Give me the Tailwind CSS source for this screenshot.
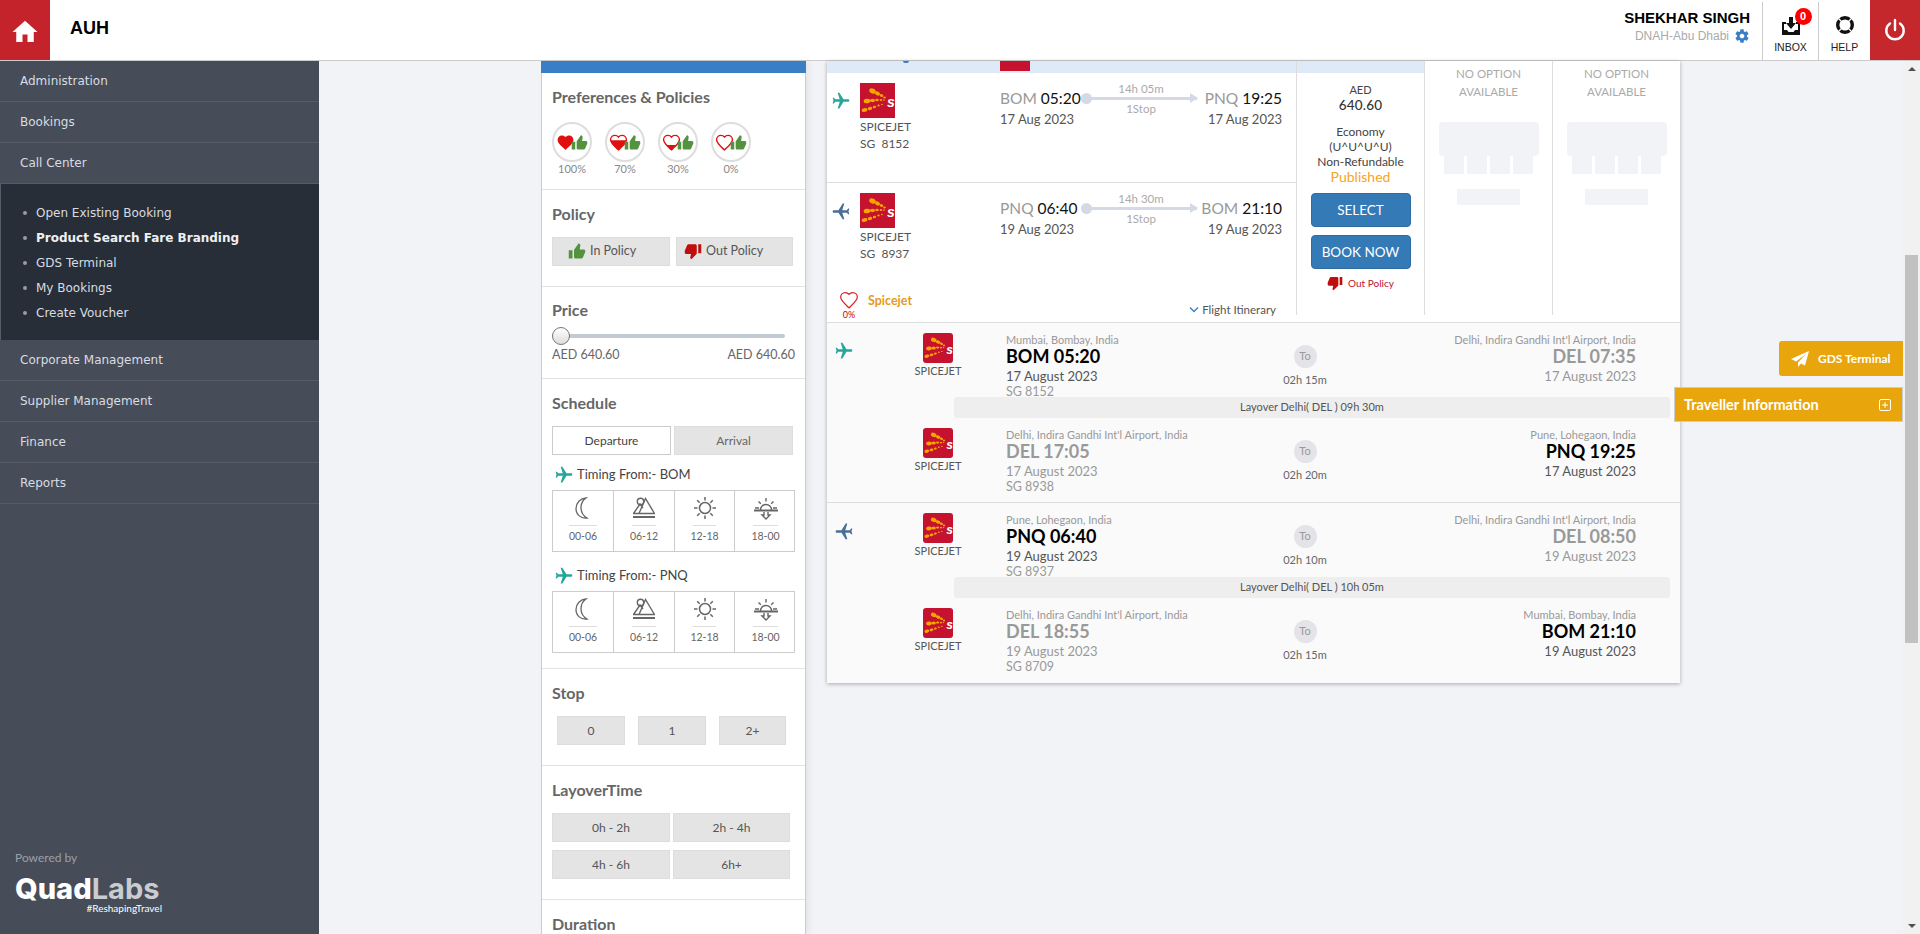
<!DOCTYPE html>
<html>
<head>
<meta charset="utf-8">
<title>AUH</title>
<script src="https://cdn.jsdelivr.net/npm/@tailwindcss/browser@4"></script>
</head>
<body class="m-0 overflow-hidden bg-[#f2f3f7] font-['Lato',sans-serif] text-[#555]">
<svg class="absolute h-0 w-0" width="0" height="0" aria-hidden="true">
  <defs>
    <clipPath id="h70"><rect x="0" y="9" width="24" height="15"/></clipPath>
    <clipPath id="h30"><rect x="0" y="15" width="24" height="9"/></clipPath>
    <symbol id="plane" viewBox="0 0 24 24"><path d="M21 16v-2l-8-5V3.500c0-.83-.67-1.500-1.500-1.500S10 2.670 10 3.500V9l-8 5v2l8-2.500V19l-2 1.500V22l3.500-1 3.500 1v-1.500L13 19v-5.500l8 2.500z" transform="rotate(90 12 12)"/></symbol>
    <symbol id="planel" viewBox="0 0 24 24"><path d="M21 16v-2l-8-5V3.500c0-.83-.67-1.500-1.500-1.500S10 2.670 10 3.500V9l-8 5v2l8-2.500V19l-2 1.500V22l3.500-1 3.500 1v-1.500L13 19v-5.500l8 2.500z" transform="rotate(-90 12 12)"/></symbol>
    <symbol id="up" viewBox="0 0 24 24"><path fill="#53923f" d="M1 22h5V11H1v11zm22-10c0-1.100-.9-2-2-2h-5.300l.75-5.570.03-.32c0-.41-.17-.79-.44-1.060L14.170 1.500 8.590 9.590C8.220 9.950 8 10.450 8 11v9c0 1.100.9 2 2 2h8c.83 0 1.540-.5 1.840-1.220l3.020-7.050c.09-.23.14-.47.14-.73v-1z"/></symbol>
    <symbol id="down" viewBox="0 0 24 24"><path fill="#c00d0d" d="M15 3H6c-.83 0-1.540.5-1.840 1.220l-3.020 7.050c-.09.23-.14.47-.14.73v2c0 1.100.9 2 2 2h6.310l-.95 4.570-.03.32c0 .41.17.79.44 1.060L9.830 23l6.590-6.590c.36-.36.580-.86.580-1.410V5c0-1.100-.9-2-2-2zm4 0v12h4V3h-4z"/></symbol>
    <symbol id="heart" viewBox="0 0 24 24"><path d="M12 21.350l-1.450-1.320C5.400 15.360 2 12.280 2 8.500 2 5.420 4.420 3 7.500 3c1.740 0 3.410.81 4.500 2.090C13.090 3.810 14.760 3 16.500 3 19.580 3 22 5.420 22 8.500c0 3.780-3.400 6.860-8.550 11.540L12 21.350z"/></symbol>
    <symbol id="logo" viewBox="0 0 35 35">
      <rect width="35" height="35" fill="#c4122f"/>
      <g fill="#f7a600">
        <ellipse cx="12.500" cy="8" rx="3.400" ry="2.500" transform="rotate(25 12.500 8)"/><ellipse cx="17.500" cy="10.500" rx="2.600" ry="1.900" transform="rotate(25 17.500 10.500)"/><ellipse cx="21.500" cy="12.500" rx="1.900" ry="1.400" transform="rotate(25 21.500 12.500)"/><ellipse cx="24.500" cy="14.500" rx="1.300" ry="1"/>
        <ellipse cx="7" cy="18" rx="3.400" ry="2.300" transform="rotate(-8 7 18)"/><ellipse cx="12.500" cy="17.500" rx="2.500" ry="1.800"/><ellipse cx="17" cy="17" rx="1.800" ry="1.300"/><ellipse cx="21" cy="17" rx="1.300" ry="1"/><ellipse cx="24" cy="17" rx="0.900" ry="0.800"/>
        <ellipse cx="4.500" cy="27" rx="2.900" ry="1.900" transform="rotate(-15 4.500 27)"/><ellipse cx="10" cy="25.500" rx="2.300" ry="1.600" transform="rotate(-15 10 25.500)"/><ellipse cx="14.500" cy="24" rx="1.700" ry="1.200" transform="rotate(-15 14.500 24)"/><ellipse cx="18.500" cy="22.500" rx="1.200" ry="0.900"/><ellipse cx="22" cy="21.500" rx="0.900" ry="0.700"/>
      </g>
      <text x="31" y="24" font-size="14" font-weight="700" font-style="italic" text-anchor="middle" fill="#fff" font-family="Liberation Sans">s</text>
    </symbol>
    <symbol id="moon" viewBox="0 0 24 24"><path d="M18 2A10.500 10.500 0 0 0 8 12.500C8 18.500 13 23 19 22A12 12 0 0 1 13 12.500 12 12 0 0 1 18 2z" fill="none" stroke="#666" stroke-width="1.300" transform="translate(-3 0)"/></symbol>
    <symbol id="mount" viewBox="0 0 24 24"><g fill="none" stroke="#666" stroke-width="1.400"><circle cx="8.500" cy="5.500" r="3.200"/><path d="M1.500 17.500 8 8l3 4M7 17.500 13.500 2.500l9 15M1 17.500h22"/><path d="M1 21h22" stroke-width="2"/></g></symbol>
    <symbol id="sun" viewBox="0 0 24 24"><g fill="none" stroke="#666" stroke-width="1.500"><circle cx="12" cy="12" r="5.500"/><path d="M12 1v3.500M12 19.500V23M1 12h3.500M19.500 12H23M4.200 4.200l2.500 2.500M17.300 17.300l2.500 2.500M19.800 4.200l-2.500 2.500M6.700 17.300l-2.500 2.500"/></g></symbol>
    <symbol id="sunset" viewBox="0 0 24 24"><g fill="none" stroke="#666" stroke-width="1.400"><path d="M6.500 14a5.500 5.500 0 0 1 11 0"/><path d="M12 2v3.500M1 12h4M19 12h4M4.500 5.500l2.300 2.300M19.500 5.500l-2.300 2.300"/><path d="M0 14.500h24" stroke-width="2"/><path d="M10 16v3H8l4 4 4-4h-2v-3"/></g></symbol>
  </defs>
</svg>

<div class="flex h-[934px] w-[1920px] flex-col overflow-hidden">
  <!-- top bar -->
  <header class="flex h-[61px] flex-none items-stretch border-b border-[#ccc] bg-white">
    <div class="flex h-[60px] w-[50px] items-center justify-center bg-[#c4232b] pt-[3px]">
      <svg width="30" height="30" viewBox="0 0 24 24" fill="#fff"><path d="M10 20v-6h4v6h5v-8h3L12 3 2 12h3v8z"/></svg>
    </div>
    <div class="ml-[20px] flex items-center pb-[3px] font-['Liberation_Sans',sans-serif] text-[18px] font-bold text-black">AUH</div>
    <div class="flex-1"></div>
    <div class="flex flex-col items-end pr-[12px] pt-[8px] font-['Liberation_Sans',sans-serif]">
      <div class="text-[15px] leading-[20px] font-bold text-black">SHEKHAR SINGH</div>
      <div class="flex items-center gap-[5px] text-[12px] leading-[16px] text-[#aaa]">DNAH-Abu Dhabi
        <svg width="16" height="16" viewBox="0 0 24 24" fill="#3a7fc6"><path d="M19.430 12.980c.04-.32.07-.64.07-.98s-.03-.66-.07-.98l2.110-1.650c.19-.15.24-.42.12-.64l-2-3.460c-.12-.22-.39-.3-.61-.22l-2.490 1c-.52-.4-1.080-.73-1.690-.98l-.38-2.650A.488.488 0 0 0 14 2h-4c-.25 0-.46.18-.49.42l-.38 2.650c-.61.25-1.170.59-1.690.98l-2.490-1c-.23-.09-.49 0-.61.22l-2 3.460c-.13.22-.07.49.12.64l2.110 1.650c-.04.32-.07.65-.07.98s.03.66.07.98l-2.110 1.650c-.19.15-.24.42-.12.64l2 3.460c.12.22.39.3.61.22l2.490-1c.52.4 1.080.73 1.690.98l.38 2.650c.03.24.24.42.49.42h4c.25 0 .46-.18.49-.42l.38-2.650c.61-.25 1.170-.59 1.690-.98l2.490 1c.23.09.49 0 .61-.22l2-3.460c.12-.22.07-.49-.12-.64l-2.110-1.650zM12 15.500c-1.930 0-3.500-1.570-3.500-3.500s1.570-3.500 3.500-3.500 3.500 1.570 3.500 3.500-1.570 3.500-3.500 3.500z"/></svg>
      </div>
    </div>
    <div class="mt-[2px] flex w-[56px] flex-col items-center border-l border-[#ccc] font-['Liberation_Sans',sans-serif]">
      <div class="relative mt-[14px] h-[19px] w-[18px]">
        <svg width="18" height="19" viewBox="0 0 18 19"><path d="M0 6h4v2H2v6h3l1.500 2h5L13 14h3V8h-2V6h4v13H0z" fill="#111"/><path d="M7 1h4v6h3l-5 6-5-6h3z" fill="#111"/></svg>
        <span class="absolute left-[13px] top-[-8px] flex h-[17px] w-[17px] items-center justify-center rounded-full bg-[#f00] text-[11px] leading-none font-bold text-white">0</span>
      </div>
      <span class="mt-[6px] text-[10.500px] leading-[12px] text-[#222]">INBOX</span>
    </div>
    <div class="mt-[2px] flex w-[52px] flex-col items-center border-l border-[#ccc] font-['Liberation_Sans',sans-serif]">
      <svg class="mt-[13px]" width="20" height="20" viewBox="0 0 20 20" fill="none"><circle cx="10" cy="10" r="7.300" stroke="#111" stroke-width="3.400"/><path d="M2.500 2.500l5 5M17.500 2.500l-5 5M2.500 17.500l5-5M17.500 17.500l-5-5" stroke="#fff" stroke-width="1.300"/></svg>
      <span class="mt-[6px] text-[10.500px] leading-[12px] text-[#222]">HELP</span>
    </div>
    <div class="flex h-[60px] w-[50px] items-center justify-center bg-[#c4272c]">
      <svg width="22" height="24" viewBox="0 0 22 24" fill="none" stroke="#fff" stroke-width="2.400" stroke-linecap="round"><path d="M11 2v10"/><path d="M6 5.500a8.700 8.700 0 1 0 10 0"/></svg>
    </div>
  </header>

  <div class="flex min-h-0 flex-1">
    <!-- sidebar -->
    <aside class="flex w-[319px] flex-none flex-col bg-[#464d59] font-['DejaVu_Sans',sans-serif] text-[12px] text-[#d8dce2]">
      <div class="flex h-[41px] items-center border-b border-[#565d69] pl-[20px]">Administration</div>
      <div class="flex h-[41px] items-center border-b border-[#565d69] pl-[20px]">Bookings</div>
      <div class="flex h-[41px] items-center border-b border-[#565d69] pl-[20px]">Call Center</div>
      <ul class="h-[156px] border-l border-[#565d69] bg-[#272e38] pl-[22px] pt-[16px]">
        <li class="flex h-[25px] items-center gap-[9px]"><span class="h-[4px] w-[4px] rounded-full bg-[#99a]"></span>Open Existing Booking</li>
        <li class="flex h-[25px] items-center gap-[9px] font-bold text-[#eef0f3]"><span class="h-[4px] w-[4px] rounded-full bg-[#99a]"></span>Product Search Fare Branding</li>
        <li class="flex h-[25px] items-center gap-[9px]"><span class="h-[4px] w-[4px] rounded-full bg-[#99a]"></span>GDS Terminal</li>
        <li class="flex h-[25px] items-center gap-[9px]"><span class="h-[4px] w-[4px] rounded-full bg-[#99a]"></span>My Bookings</li>
        <li class="flex h-[25px] items-center gap-[9px]"><span class="h-[4px] w-[4px] rounded-full bg-[#99a]"></span>Create Voucher</li>
      </ul>
      <div class="flex h-[41px] items-center border-b border-[#565d69] pl-[20px]">Corporate Management</div>
      <div class="flex h-[41px] items-center border-b border-[#565d69] pl-[20px]">Supplier Management</div>
      <div class="flex h-[41px] items-center border-b border-[#565d69] pl-[20px]">Finance</div>
      <div class="flex h-[41px] items-center border-b border-[#565d69] pl-[20px]">Reports</div>
      <div class="flex-1"></div>
      <div class="pb-[20px] pl-[15px]">
        <div class="font-['Lato',sans-serif] text-[12px] leading-[16px] text-[#9aa0a8]">Powered by</div>
        <div class="mt-[9px] w-[147px]">
          <div class="h-[27px] whitespace-nowrap font-['Inter',sans-serif] text-[29px] leading-[27px] font-extrabold text-white">Quad<span class="font-bold text-[#c9ccd0]">Labs</span></div>
          <div class="text-right font-['Lato',sans-serif] text-[10px] leading-[12px] text-white">#ReshapingTravel</div>
        </div>
      </div>
    </aside>

    <!-- main -->
    <main class="relative flex min-w-0 flex-1 pl-[222px]">
      <!-- filters -->
      <div class="h-[873px] w-[265px] flex-none overflow-hidden shadow-[3px_0_6px_rgba(0,0,0,0.06)]">
        <div class="h-[12px] bg-[#3a7fc6]"></div>
        <div class="h-[861px] border-x border-[#ccc] bg-white">
          <section class="h-[117px] border-b border-[#e2e2e2] px-[10px] pt-[14px]">
            <h3 class="text-[16px] leading-[20px] font-bold text-[#666]">Preferences &amp; Policies</h3>
            <div class="mt-[15px] flex gap-[13px]">
              <div class="w-[40px] text-center">
                <div class="flex h-[40px] w-[40px] items-center justify-center rounded-full border-2 border-[#ddd]"><svg width="19" height="19" fill="#e01010"><use href="#heart"/></svg><svg class="ml-[-4px]" width="17" height="17"><use href="#up"/></svg></div>
                <div class="text-[11px] leading-[14px] text-[#888]">100%</div>
              </div>
              <div class="w-[40px] text-center">
                <div class="flex h-[40px] w-[40px] items-center justify-center rounded-full border-2 border-[#ddd]"><svg width="19" height="19" viewBox="0 0 24 24"><use href="#heart" width="24" height="24" fill="none" stroke="#e01010" stroke-width="1.800"/><g clip-path="url(#h70)"><use href="#heart" width="24" height="24" fill="#e01010"/></g></svg><svg class="ml-[-4px]" width="17" height="17"><use href="#up"/></svg></div>
                <div class="text-[11px] leading-[14px] text-[#888]">70%</div>
              </div>
              <div class="w-[40px] text-center">
                <div class="flex h-[40px] w-[40px] items-center justify-center rounded-full border-2 border-[#ddd]"><svg width="19" height="19" viewBox="0 0 24 24"><use href="#heart" width="24" height="24" fill="none" stroke="#e01010" stroke-width="1.800"/><g clip-path="url(#h30)"><use href="#heart" width="24" height="24" fill="#e01010"/></g></svg><svg class="ml-[-4px]" width="17" height="17"><use href="#up"/></svg></div>
                <div class="text-[11px] leading-[14px] text-[#888]">30%</div>
              </div>
              <div class="w-[40px] text-center">
                <div class="flex h-[40px] w-[40px] items-center justify-center rounded-full border-2 border-[#ddd]"><svg width="19" height="19" fill="none" stroke="#e01010" stroke-width="1.800"><use href="#heart"/></svg><svg class="ml-[-4px]" width="17" height="17"><use href="#up"/></svg></div>
                <div class="text-[11px] leading-[14px] text-[#888]">0%</div>
              </div>
            </div>
          </section>
          <section class="h-[97px] border-b border-[#e2e2e2] px-[10px] pt-[14px]">
            <h3 class="text-[16px] leading-[20px] font-bold text-[#666]">Policy</h3>
            <div class="mt-[13px] flex gap-[6px]">
              <div class="flex h-[29px] w-[118px] items-center gap-[4px] border border-[#ddd] bg-[#e4e4e4] pb-[1px] pl-[15px] text-[12.500px] text-[#555]"><svg width="18" height="18"><use href="#up"/></svg>In Policy</div>
              <div class="flex h-[29px] w-[117px] items-center gap-[4px] border border-[#ddd] bg-[#e4e4e4] pb-[1px] pl-[7px] text-[12.500px] text-[#555]"><svg width="18" height="18"><use href="#down"/></svg>Out Policy</div>
            </div>
          </section>
          <section class="h-[92px] border-b border-[#e2e2e2] px-[10px] pt-[13px]">
            <h3 class="text-[16px] leading-[20px] font-bold text-[#666]">Price</h3>
            <div class="relative mt-[7px] h-[18px] w-[233px]">
              <div class="absolute left-0 right-0 top-[7px] h-[4px] rounded bg-[#c3cad3]"></div>
              <div class="absolute left-0 top-0 h-[18px] w-[18px] rounded-full border border-[#777] bg-gradient-to-b from-white to-[#ddd]"></div>
            </div>
            <div class="mt-[2px] flex w-[243px] justify-between text-[12.500px] leading-[16px] text-[#666]"><span>AED 640.60</span><span>AED 640.60</span></div>
          </section>
          <section class="h-[290px] border-b border-[#e2e2e2] px-[10px] pt-[14px]">
            <h3 class="text-[16px] leading-[20px] font-bold text-[#666]">Schedule</h3>
            <div class="mt-[13px] flex gap-[3px]">
              <div class="flex h-[29px] w-[119px] items-center justify-center border border-[#ccc] bg-white text-[12px] text-[#444]">Departure</div>
              <div class="flex h-[29px] w-[119px] items-center justify-center border border-[#ddd] bg-[#e4e4e4] text-[12px] text-[#666]">Arrival</div>
            </div>
            <div class="mt-[11px] flex h-[18px] items-center gap-[3px] pl-[2px] text-[13px] text-[#444]"><svg width="20" height="20" fill="#26a69a"><use href="#plane"/></svg>Timing From:- BOM</div>
            <div class="mt-[6px] grid h-[62px] w-[243px] grid-cols-[61px_61px_60px_61px] border border-[#ccc] text-[10.500px] text-[#666]">
              <div class="flex flex-col items-center border-r border-[#ccc] pt-[5px]"><svg width="24" height="24"><use href="#moon"/></svg><div class="mt-[5px] flex w-[28px] justify-center border-t border-[#ddd] pt-[3px] leading-[14px] whitespace-nowrap">00-06</div></div>
              <div class="flex flex-col items-center border-r border-[#ccc] pt-[5px]"><svg width="24" height="24"><use href="#mount"/></svg><div class="mt-[5px] flex w-[24px] justify-center border-t border-[#ddd] pt-[3px] leading-[14px] whitespace-nowrap">06-12</div></div>
              <div class="flex flex-col items-center border-r border-[#ccc] pt-[5px]"><svg width="24" height="24"><use href="#sun"/></svg><div class="mt-[5px] flex w-[23px] justify-center border-t border-[#ddd] pt-[3px] leading-[14px] whitespace-nowrap">12-18</div></div>
              <div class="flex flex-col items-center pt-[5px]"><svg width="24" height="24"><use href="#sunset"/></svg><div class="mt-[5px] flex w-[25px] justify-center border-t border-[#ddd] pt-[3px] leading-[14px] whitespace-nowrap">18-00</div></div>
            </div>
            <div class="mt-[15px] flex h-[18px] items-center gap-[3px] pl-[2px] text-[13px] text-[#444]"><svg width="20" height="20" fill="#26a69a"><use href="#plane"/></svg>Timing From:- PNQ</div>
            <div class="mt-[6px] grid h-[62px] w-[243px] grid-cols-[61px_61px_60px_61px] border border-[#ccc] text-[10.500px] text-[#666]">
              <div class="flex flex-col items-center border-r border-[#ccc] pt-[5px]"><svg width="24" height="24"><use href="#moon"/></svg><div class="mt-[5px] flex w-[28px] justify-center border-t border-[#ddd] pt-[3px] leading-[14px] whitespace-nowrap">00-06</div></div>
              <div class="flex flex-col items-center border-r border-[#ccc] pt-[5px]"><svg width="24" height="24"><use href="#mount"/></svg><div class="mt-[5px] flex w-[24px] justify-center border-t border-[#ddd] pt-[3px] leading-[14px] whitespace-nowrap">06-12</div></div>
              <div class="flex flex-col items-center border-r border-[#ccc] pt-[5px]"><svg width="24" height="24"><use href="#sun"/></svg><div class="mt-[5px] flex w-[23px] justify-center border-t border-[#ddd] pt-[3px] leading-[14px] whitespace-nowrap">12-18</div></div>
              <div class="flex flex-col items-center pt-[5px]"><svg width="24" height="24"><use href="#sunset"/></svg><div class="mt-[5px] flex w-[25px] justify-center border-t border-[#ddd] pt-[3px] leading-[14px] whitespace-nowrap">18-00</div></div>
            </div>
          </section>
          <section class="h-[97px] border-b border-[#e2e2e2] px-[10px] pt-[14px]">
            <h3 class="text-[16px] leading-[20px] font-bold text-[#666]">Stop</h3>
            <div class="mt-[13px] flex gap-[13px] pl-[5px]">
              <div class="flex h-[29px] w-[68px] items-center justify-center border border-[#ddd] bg-[#e4e4e4] text-[12px]">0</div>
              <div class="flex h-[29px] w-[68px] items-center justify-center border border-[#ddd] bg-[#e4e4e4] text-[12px]">1</div>
              <div class="flex h-[29px] w-[67px] items-center justify-center border border-[#ddd] bg-[#e4e4e4] text-[12px]">2+</div>
            </div>
          </section>
          <section class="h-[134px] border-b border-[#e2e2e2] px-[10px] pt-[14px]">
            <h3 class="text-[16px] leading-[20px] font-bold text-[#666]">LayoverTime</h3>
            <div class="mt-[13px] grid w-[238px] grid-cols-[118px_117px] gap-x-[3px] gap-y-[8px]">
              <div class="flex h-[29px] items-center justify-center border border-[#ddd] bg-[#e4e4e4] text-[12px]">0h - 2h</div>
              <div class="flex h-[29px] items-center justify-center border border-[#ddd] bg-[#e4e4e4] text-[12px]">2h - 4h</div>
              <div class="flex h-[29px] items-center justify-center border border-[#ddd] bg-[#e4e4e4] text-[12px]">4h - 6h</div>
              <div class="flex h-[29px] items-center justify-center border border-[#ddd] bg-[#e4e4e4] text-[12px]">6h+</div>
            </div>
          </section>
          <section class="px-[10px] pt-[14px]">
            <h3 class="text-[16px] leading-[20px] font-bold text-[#666]">Duration</h3>
          </section>
        </div>
      </div>

      <!-- results card -->
      <div class="ml-[21px] h-[622px] w-[853px] flex-none shadow-[0_1px_4px_rgba(0,0,0,0.3)]">
        <div class="flex h-[262px] border-b border-[#ddd] bg-white">
          <div class="flex h-[254px] w-[470px] flex-none flex-col border-r border-[#ddd]">
            <div class="relative h-[12px] bg-[#deeaf7]">
              <span class="absolute left-[173px] top-0 h-[10px] w-[30px] bg-[#c4122f]"></span>
              <span class="absolute left-[76px] top-0 h-[2px] w-[6px] rounded-b bg-[#3a7fc6]"></span>
            </div>
            <div class="flex h-[110px] border-b border-[#ddd] pt-[10px]">
              <div class="ml-[4px] mt-[8px] w-[29px]"><svg class="block" width="20" height="20" fill="#26a69a"><use href="#plane"/></svg></div>
              <div class="w-[140px] text-[12px] text-[#555]">
                <svg class="block" width="35" height="35"><use href="#logo"/></svg>
                <div class="mt-[0px] leading-[17px]">SPICEJET</div>
                <div class="leading-[17px]">SG&nbsp; 8152</div>
              </div>
              <div class="w-[81px] pt-[5px]">
                <div class="text-[15.500px] leading-[21px] whitespace-nowrap text-[#999]">BOM <span class="text-[#111]">05:20</span></div>
                <div class="mt-[1px] text-[13px] leading-[18px] text-[#555] whitespace-nowrap">17 Aug 2023</div>
              </div>
              <div class="-mt-[2px] flex w-[116px] flex-col items-center text-[11.500px] leading-[16px] text-[#aaa]">
                <span class="pl-[4px]">14h 05m</span>
                <div class="relative h-[3px] w-full bg-[#d5d9e5]">
                  <span class="absolute left-0 top-[-4px] h-[11px] w-[11px] rounded-full bg-[#d5d9e5]"></span>
                  <span class="absolute right-[-1px] top-[-4px] h-0 w-0 border-y-[5.500px] border-l-[8px] border-y-transparent border-l-[#d5d9e5]"></span>
                </div>
                <span class="mt-[1px] pl-[4px]">1Stop</span>
              </div>
              <div class="w-[85px] pt-[5px] text-right">
                <div class="text-[15.500px] leading-[21px] whitespace-nowrap text-[#999]">PNQ <span class="text-[#111]">19:25</span></div>
                <div class="mt-[1px] text-[13px] leading-[18px] text-[#555] whitespace-nowrap">17 Aug 2023</div>
              </div>
            </div>
            <div class="relative flex flex-1 pt-[10px]">
              <div class="ml-[4px] mt-[8px] w-[29px]"><svg class="block" width="20" height="20" fill="#4a6f96"><use href="#planel"/></svg></div>
              <div class="w-[140px] text-[12px] text-[#555]">
                <svg class="block" width="35" height="35"><use href="#logo"/></svg>
                <div class="mt-[0px] leading-[17px]">SPICEJET</div>
                <div class="leading-[17px]">SG&nbsp; 8937</div>
              </div>
              <div class="w-[81px] pt-[5px]">
                <div class="text-[15.500px] leading-[21px] whitespace-nowrap text-[#999]">PNQ <span class="text-[#111]">06:40</span></div>
                <div class="mt-[1px] text-[13px] leading-[18px] text-[#555] whitespace-nowrap">19 Aug 2023</div>
              </div>
              <div class="-mt-[2px] flex w-[116px] flex-col items-center text-[11.500px] leading-[16px] text-[#aaa]">
                <span class="pl-[4px]">14h 30m</span>
                <div class="relative h-[3px] w-full bg-[#d5d9e5]">
                  <span class="absolute left-0 top-[-4px] h-[11px] w-[11px] rounded-full bg-[#d5d9e5]"></span>
                  <span class="absolute right-[-1px] top-[-4px] h-0 w-0 border-y-[5.500px] border-l-[8px] border-y-transparent border-l-[#d5d9e5]"></span>
                </div>
                <span class="mt-[1px] pl-[4px]">1Stop</span>
              </div>
              <div class="w-[85px] pt-[5px] text-right">
                <div class="text-[15.500px] leading-[21px] whitespace-nowrap text-[#999]">BOM <span class="text-[#111]">21:10</span></div>
                <div class="mt-[1px] text-[13px] leading-[18px] text-[#555] whitespace-nowrap">19 Aug 2023</div>
              </div>
              <div class="absolute bottom-[-5px] left-[12px] flex w-[20px] flex-col items-center">
                <svg width="20" height="20" fill="none" stroke="#e01f2b" stroke-width="1.500"><use href="#heart"/></svg>
                <span class="text-[9px] leading-[10px] text-[#c00]">0%</span>
              </div>
              <div class="absolute bottom-[6px] left-[41px] text-[12.500px] leading-[16px] font-bold text-[#e69a1c]">Spicejet</div>
              <div class="absolute bottom-[-3px] right-[20px] flex items-center gap-[3px] text-[11.500px] leading-[16px] text-[#555]">
                <svg width="10" height="8" viewBox="0 0 10 8" fill="none" stroke="#3a7fc6" stroke-width="1.400"><path d="M1 1.500l4 4 4-4"/></svg>Flight Itinerary
              </div>
            </div>
          </div>
          <div class="flex h-[254px] w-[128px] flex-none flex-col items-center border-r border-[#ddd]">
            <div class="h-[12px] w-full bg-[#deeaf7]"></div>
            <div class="mt-[9px] text-[11px] leading-[16px] text-[#444]">AED</div>
            <div class="text-[13.500px] leading-[15px] font-medium tracking-[0.2px] text-[#333]">640.60</div>
            <div class="mt-[11px] text-[12px] leading-[15px] text-[#444]">Economy</div>
            <div class="text-[12px] leading-[15px] text-[#444]">(U^U^U^U)</div>
            <div class="text-[12px] leading-[15px] text-[#444]">Non-Refundable</div>
            <div class="text-[14px] leading-[15px] text-[#f5a623]">Published</div>
            <div class="mt-[9px] flex h-[34px] w-[100px] items-center justify-center rounded-[4px] border border-[#2e6da4] bg-[#337ab7] text-[13.500px] text-white">SELECT</div>
            <div class="mt-[8px] flex h-[34px] w-[100px] items-center justify-center rounded-[4px] border border-[#2e6da4] bg-[#337ab7] text-[13.500px] text-white">BOOK NOW</div>
            <div class="mt-[6px] flex items-center gap-[5px] text-[10px] text-[#c0102f]"><svg width="16" height="16"><use href="#down"/></svg>Out Policy</div>
          </div>
          <div class="flex h-[254px] w-[128px] flex-none flex-col items-center border-r border-[#ddd] pt-[4px]">
            <div class="text-center text-[11.500px] leading-[18px] text-[#aaa]">NO OPTION<br>AVAILABLE</div>
            <div class="mt-[21px] h-[34px] w-[100px] rounded-[4px] bg-[#f2f3f7]"></div>
            <div class="flex gap-[3px]"><span class="h-[18px] w-[20px] bg-[#f2f3f7]"></span><span class="h-[18px] w-[20px] bg-[#f2f3f7]"></span><span class="h-[18px] w-[20px] bg-[#f2f3f7]"></span><span class="h-[18px] w-[20px] bg-[#f2f3f7]"></span></div>
            <div class="mt-[15px] h-[16px] w-[63px] bg-[#f2f3f7]"></div>
          </div>
          <div class="flex h-[254px] w-[127px] flex-none flex-col items-center pt-[4px]">
            <div class="text-center text-[11.500px] leading-[18px] text-[#aaa]">NO OPTION<br>AVAILABLE</div>
            <div class="mt-[21px] h-[34px] w-[100px] rounded-[4px] bg-[#f2f3f7]"></div>
            <div class="flex gap-[3px]"><span class="h-[18px] w-[20px] bg-[#f2f3f7]"></span><span class="h-[18px] w-[20px] bg-[#f2f3f7]"></span><span class="h-[18px] w-[20px] bg-[#f2f3f7]"></span><span class="h-[18px] w-[20px] bg-[#f2f3f7]"></span></div>
            <div class="mt-[15px] h-[16px] w-[63px] bg-[#f2f3f7]"></div>
          </div>
        </div>

        <div class="bg-[#fafafa]">
          <!-- outbound -->
          <div class="h-[74px] flex pt-[10px]">
            <div class="w-[81px] pl-[7px] pt-[8px]"><svg class="block" width="20" height="20" fill="#26a69a"><use href="#plane"/></svg></div>
            <div class="flex w-[60px] flex-col items-center"><svg class="block rounded-[3px]" width="30" height="30"><use href="#logo"/></svg><span class="text-[11px] leading-[16px] text-[#555]">SPICEJET</span></div>
            <div class="ml-[38px] w-[269px]">
              <div class="text-[11px] leading-[13px] text-[#999]">Mumbai, Bombay, India</div>
              <div class="text-[18px] leading-[21px] font-bold text-black">BOM 05:20</div>
              <div class="text-[13px] leading-[18px] text-[#555]">17 August 2023</div>
              <div class="text-[12.500px] leading-[13px] text-[#999]">SG 8152</div>
            </div>
            <div class="flex w-[60px] flex-col items-center"><span class="mt-[12px] flex h-[23px] w-[23px] items-center justify-center rounded-full bg-[#e4e4e8] text-[11px] text-[#999]">To</span><span class="mt-[4px] text-[11px] leading-[16px] text-[#666]">02h 15m</span></div>
            <div class="w-[301px] text-right">
              <div class="text-[11px] leading-[13px] text-[#999]">Delhi, Indira Gandhi Int'l Airport, India</div>
              <div class="text-[18px] leading-[21px] font-bold text-[#999]">DEL 07:35</div>
              <div class="text-[13px] leading-[18px] text-[#999]">17 August 2023</div>
            </div>
          </div>
          <div class="ml-[127px] flex h-[21px] w-[716px] items-center justify-center rounded-[3px] bg-[#eee] text-[11px] text-[#555]">Layover Delhi( DEL ) 09h 30m</div>
          <div class="h-[85px] flex border-b border-[#ddd] pt-[10px]">
            <div class="w-[81px]"></div>
            <div class="flex w-[60px] flex-col items-center"><svg class="block rounded-[3px]" width="30" height="30"><use href="#logo"/></svg><span class="text-[11px] leading-[16px] text-[#555]">SPICEJET</span></div>
            <div class="ml-[38px] w-[269px]">
              <div class="text-[11px] leading-[13px] text-[#999]">Delhi, Indira Gandhi Int'l Airport, India</div>
              <div class="text-[18px] leading-[21px] font-bold text-[#999]">DEL 17:05</div>
              <div class="text-[13px] leading-[18px] text-[#999]">17 August 2023</div>
              <div class="text-[12.500px] leading-[13px] text-[#999]">SG 8938</div>
            </div>
            <div class="flex w-[60px] flex-col items-center"><span class="mt-[12px] flex h-[23px] w-[23px] items-center justify-center rounded-full bg-[#e4e4e8] text-[11px] text-[#999]">To</span><span class="mt-[4px] text-[11px] leading-[16px] text-[#666]">02h 20m</span></div>
            <div class="w-[301px] text-right">
              <div class="text-[11px] leading-[13px] text-[#999]">Pune, Lohegaon, India</div>
              <div class="text-[18px] leading-[21px] font-bold text-black">PNQ 19:25</div>
              <div class="text-[13px] leading-[18px] text-[#555]">17 August 2023</div>
            </div>
          </div>
          <!-- return -->
          <div class="h-[74px] flex pt-[10px]">
            <div class="w-[81px] pl-[7px] pt-[8px]"><svg class="block" width="20" height="20" fill="#4a6f96"><use href="#planel"/></svg></div>
            <div class="flex w-[60px] flex-col items-center"><svg class="block rounded-[3px]" width="30" height="30"><use href="#logo"/></svg><span class="text-[11px] leading-[16px] text-[#555]">SPICEJET</span></div>
            <div class="ml-[38px] w-[269px]">
              <div class="text-[11px] leading-[13px] text-[#999]">Pune, Lohegaon, India</div>
              <div class="text-[18px] leading-[21px] font-bold text-black">PNQ 06:40</div>
              <div class="text-[13px] leading-[18px] text-[#555]">19 August 2023</div>
              <div class="text-[12.500px] leading-[13px] text-[#999]">SG 8937</div>
            </div>
            <div class="flex w-[60px] flex-col items-center"><span class="mt-[12px] flex h-[23px] w-[23px] items-center justify-center rounded-full bg-[#e4e4e8] text-[11px] text-[#999]">To</span><span class="mt-[4px] text-[11px] leading-[16px] text-[#666]">02h 10m</span></div>
            <div class="w-[301px] text-right">
              <div class="text-[11px] leading-[13px] text-[#999]">Delhi, Indira Gandhi Int'l Airport, India</div>
              <div class="text-[18px] leading-[21px] font-bold text-[#999]">DEL 08:50</div>
              <div class="text-[13px] leading-[18px] text-[#999]">19 August 2023</div>
            </div>
          </div>
          <div class="ml-[127px] flex h-[21px] w-[716px] items-center justify-center rounded-[3px] bg-[#eee] text-[11px] text-[#555]">Layover Delhi( DEL ) 10h 05m</div>
          <div class="h-[85px] flex pt-[10px]">
            <div class="w-[81px]"></div>
            <div class="flex w-[60px] flex-col items-center"><svg class="block rounded-[3px]" width="30" height="30"><use href="#logo"/></svg><span class="text-[11px] leading-[16px] text-[#555]">SPICEJET</span></div>
            <div class="ml-[38px] w-[269px]">
              <div class="text-[11px] leading-[13px] text-[#999]">Delhi, Indira Gandhi Int'l Airport, India</div>
              <div class="text-[18px] leading-[21px] font-bold text-[#999]">DEL 18:55</div>
              <div class="text-[13px] leading-[18px] text-[#999]">19 August 2023</div>
              <div class="text-[12.500px] leading-[13px] text-[#999]">SG 8709</div>
            </div>
            <div class="flex w-[60px] flex-col items-center"><span class="mt-[12px] flex h-[23px] w-[23px] items-center justify-center rounded-full bg-[#e4e4e8] text-[11px] text-[#999]">To</span><span class="mt-[4px] text-[11px] leading-[16px] text-[#666]">02h 15m</span></div>
            <div class="w-[301px] text-right">
              <div class="text-[11px] leading-[13px] text-[#999]">Mumbai, Bombay, India</div>
              <div class="text-[18px] leading-[21px] font-bold text-black">BOM 21:10</div>
              <div class="text-[13px] leading-[18px] text-[#555]">19 August 2023</div>
            </div>
          </div>
        </div>
      </div>

      <!-- floating tabs -->
      <div class="absolute right-[17px] top-[280px] flex h-[35px] w-[124px] items-center gap-[8px] rounded-l-[3px] bg-[#e8a60c] pl-[11px] text-[12px] font-bold text-white">
        <svg width="20" height="20" viewBox="0 0 20 20" fill="#fff"><path d="M19 2 1 10l5 2.500L16 5l-8 8.500V18l3-3.500 4 2z"/></svg>GDS Terminal
      </div>
      <div class="absolute right-[17px] top-[326px] flex h-[35px] w-[229px] items-center justify-between border border-[#ccc] bg-[#e8a60c] pl-[9px] pr-[11px] text-[14.500px] font-bold text-white">
        <span>Traveller Information</span>
        <svg width="12" height="12" viewBox="0 0 12 12" fill="none" stroke="#fff"><rect x="0.500" y="0.500" width="11" height="11" rx="1.500"/><path d="M6 3v6M3 6h6"/></svg>
      </div>

      <!-- page scrollbar -->
      <div class="ml-auto flex h-full w-[17px] flex-none flex-col items-center bg-[#f1f1f1]">
        <span class="mt-[6px] h-0 w-0 border-x-[4px] border-b-[4px] border-x-transparent border-b-[#505050]"></span>
        <div class="mt-[184px] h-[388px] w-[13px] bg-[#c1c1c1]"></div>
        <span class="mb-[6px] mt-auto h-0 w-0 border-x-[4px] border-t-[4px] border-x-transparent border-t-[#505050]"></span>
      </div>
    </main>
  </div>
</div>
</body>
</html>
